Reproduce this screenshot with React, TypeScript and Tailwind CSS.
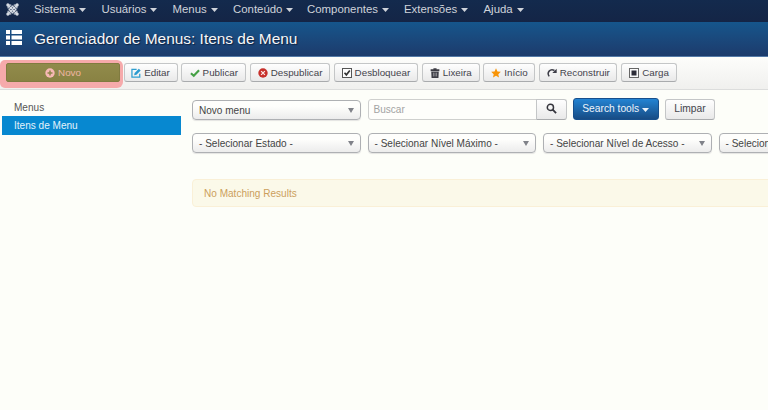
import type { ReactNode } from "react";

const menus = [
  { label: "Sistema", w: "w-[67.5px]" },
  { label: "Usuários", w: "w-[71px]" },
  { label: "Menus", w: "w-[60.5px]" },
  { label: "Conteúdo", w: "w-[74px]" },
  { label: "Componentes", w: "w-[97px]" },
  { label: "Extensões", w: "w-[79.5px]" },
  { label: "Ajuda", w: "w-[50px]" },
];

function Caret({ className = "" }: { className?: string }) {
  return (
    <svg viewBox="0 0 7 4" className={`h-[4px] w-[7px] shrink-0 ${className}`}>
      <path d="M0 0h7L3.5 4z" fill="currentColor" />
    </svg>
  );
}

function JoomlaLogo() {
  return (
    <svg viewBox="0 0 24 24" className="h-[13px] w-[13px]" fill="none" stroke="#d5dbe3" strokeLinecap="round">
      <path d="M6 12L12 6L18 12L12 18z" strokeWidth="2.600" />
      <path d="M4 4l13 13M20 4L7 17M4 20L9 15M20 20L15 15" strokeWidth="2.400" />
      <path d="M4 9V4h5M20 9V4h-5M4 15v5h5M20 15v5h-5" strokeWidth="2.400" />
      <g fill="#d5dbe3" stroke="none">
        <circle cx="3.500" cy="3.500" r="3" />
        <circle cx="20.500" cy="3.500" r="3" />
        <circle cx="3.500" cy="20.500" r="3" />
        <circle cx="20.500" cy="20.500" r="3" />
      </g>
    </svg>
  );
}

function Icon({ children }: { children: ReactNode }) {
  return (
    <svg viewBox="0 0 16 16" className="h-[10px] w-[10px] shrink-0">
      {children}
    </svg>
  );
}

const icons = {
  edit: (
    <Icon>
      <path d="M9 2H1.500v12.500H14V9" fill="none" stroke="#2f9fd0" strokeWidth="2" />
      <path d="M5 11.500l.8-3.700L12.500 1 15.500 4 8.700 10.700z" fill="#2b9bd0" />
    </Icon>
  ),
  check: (
    <Icon>
      <path d="M1.500 8.500l4.500 4L14.500 3.500" fill="none" stroke="#45a045" strokeWidth="3.400" />
    </Icon>
  ),
  cancel: (
    <Icon>
      <circle cx="8" cy="8" r="7.500" fill="#c7302b" />
      <path d="M5 5l6 6M11 5l-6 6" stroke="#fbe8e6" strokeWidth="2" />
    </Icon>
  ),
  checkbox: (
    <Icon>
      <rect x=".800" y=".800" width="14.400" height="14.400" fill="#fdfdfd" stroke="#555" strokeWidth="1.600" />
      <path d="M4 7.500l3 3.500 5.500-7" fill="none" stroke="#333" strokeWidth="2.600" />
    </Icon>
  ),
  trash: (
    <Icon>
      <path d="M5.500 2V.500h5V2H15v3H1V2zM2 6h12l-.5 10h-11z" fill="#3c3c44" />
      <path d="M5.500 7.500v6M8 7.500v6M10.500 7.500v6" stroke="#c8c8cc" strokeWidth=".9" />
    </Icon>
  ),
  star: (
    <Icon>
      <path d="M8 .500l2.300 5 5.400.600-4 3.700 1.100 5.400L8 12.500l-4.800 2.700 1.100-5.400-4-3.700 5.400-.600z" fill="#f89406" />
    </Icon>
  ),
  refresh: (
    <Icon>
      <path d="M3.500 13.500C-1 7 5 .500 12 4" fill="none" stroke="#3d3d47" strokeWidth="2.400" />
      <path d="M15.500 1v7H8.500z" fill="#3d3d47" />
    </Icon>
  ),
  batch: (
    <Icon>
      <rect x=".800" y=".800" width="14.400" height="14.400" fill="#fafafa" stroke="#666" strokeWidth="1.600" />
      <rect x="4" y="4" width="8" height="8" fill="#2c2c38" />
    </Icon>
  ),
};

const actions = [
  { label: "Editar", icon: icons.edit, w: "w-[54px]" },
  { label: "Publicar", icon: icons.check, w: "w-[65px]" },
  { label: "Despublicar", icon: icons.cancel, w: "w-[80px]" },
  { label: "Desbloquear", icon: icons.checkbox, w: "w-[84px]" },
  { label: "Lixeira", icon: icons.trash, w: "w-[58px]" },
  { label: "Início", icon: icons.star, w: "w-[52px]" },
  { label: "Reconstruir", icon: icons.refresh, w: "w-[78px]" },
  { label: "Carga", icon: icons.batch, w: "w-[56px]" },
];

const button =
  "flex shrink-0 items-center justify-center rounded-[3px] border border-[#c4c6c7] border-b-[#a9abad] bg-linear-to-b from-[#fefefe] to-[#e9e9e9] whitespace-nowrap text-[#44444c]";

function Select({ label }: { label: string }) {
  return (
    <div className="flex h-5 w-[168.500px] shrink-0 items-center justify-between rounded-[4px] border border-[#aeb0b3] bg-linear-to-b from-[#fefefc] from-30% to-[#ececec] pr-[6px] pl-[6px] whitespace-nowrap text-[#444] shadow-[0_1px_1px_#e4e4e2]">
      <span className="pt-[2px]">{label}</span>
      <svg viewBox="0 0 6 5" className="h-[5px] w-[6px] text-[#808289]">
        <path d="M0 0h6L3 5z" fill="currentColor" />
      </svg>
    </div>
  );
}

export default function App() {
  return (
    <div className="h-[410px] w-[768px] overflow-hidden bg-[#fdfef9] font-['Liberation_Sans',Arial,sans-serif] text-[10.050px] leading-none">
      <nav className="flex h-[22px] bg-linear-to-b from-[#132a4d] to-[#142546] text-[11.400px] text-[#cfd3da]">
        <div className="w-[34px] shrink-0 pt-[3px] pl-[6px]">
          <JoomlaLogo />
        </div>
        {menus.map((m) => (
          <div key={m.label} className={`flex h-[19px] shrink-0 items-center gap-1 ${m.w}`}>
            <span>{m.label}</span>
            <Caret className="mt-px" />
          </div>
        ))}
      </nav>
      <header className="flex h-[35px] items-center border-b border-[#547aa8] bg-linear-to-b from-[#15568c] to-[#1c3b6c] pl-[6px] text-[#f6f7f8]">
        <svg viewBox="0 0 16 15" className="mt-[-3px] h-[15px] w-4" fill="#fff">
          <path d="M0 0h4v4H0zM5.500 0H16v4H5.500zM0 5.500h4v4H0zM5.500 5.500H16v4H5.500zM0 11h4v4H0zM5.500 11H16v4H5.500z" />
        </svg>
        <h1 className="ml-3 text-[15.450px] whitespace-nowrap [text-shadow:1px_1px_1px_#10213f]">Gerenciador de Menus: Itens de Menu</h1>
      </header>
      <div className="flex h-[33px] items-start border-b border-[#dcdddc] bg-linear-to-b from-[#fdfdfb] to-[#f0f0ee] text-[9.800px]">
        <div className="mt-[3px] h-7 w-[123px] shrink-0 rounded-r-[6px] rounded-l-[5px] bg-[#f6aaab] pt-[3px] pl-[6px]">
          <div className="flex h-[19px] w-[114px] items-center justify-center gap-[3px] rounded-[2px] border border-[#807b40] bg-linear-to-b from-[#918b4b] to-[#898243] text-[#f0b5a4]">
            <Icon>
              <circle cx="8" cy="8" r="7.500" fill="#f8b9b5" />
              <path d="M8 4v8M4 8h8" stroke="#8d8548" strokeWidth="2.400" />
            </Icon>
            <span>Novo</span>
          </div>
        </div>
        <div className="ml-[0.500px] flex gap-[3.800px] pt-[6px]">
          {actions.map((a) => (
            <button key={a.label} className={`h-[19px] gap-[3px] ${button} ${a.w}`}>
              {a.icon}
              <span>{a.label}</span>
            </button>
          ))}
        </div>
      </div>
      <main className="flex pt-2">
        <aside className="w-[192px] shrink-0 pl-[2px]">
          <div className="flex h-[18px] items-center pl-3 pt-[3px] text-[#555]">Menus</div>
          <div className="flex h-[19px] w-[179px] items-center bg-[#0788d0] pt-[2px] pl-3 text-[#e4f3fb]">Itens de Menu</div>
        </aside>
        <section className="w-[576px] overflow-hidden">
          <div className="flex h-[22px] items-start">
            <div className="pt-[2px]">
              <Select label="Novo menu" />
            </div>
            <div className="mt-px ml-[7px] flex h-[21px] w-[169px] shrink-0 items-center rounded-l-[3px] border border-[#cfd0ce] bg-[#fefefb] pt-px pl-[5px] text-[#a3a3a3]">Buscar</div>
            <button className={`mt-px -ml-px h-[21px] w-[31px] rounded-l-none ${button}`}>
              <svg viewBox="0 0 12 12" className="mt-[-3px] h-[11px] w-[11px]" fill="none" stroke="#34343c">
                <circle cx="4.800" cy="4.800" r="3.400" strokeWidth="1.600" />
                <path d="M7.300 7.300L11 11" strokeWidth="2" />
              </svg>
            </button>
            <button className="ml-[6.500px] flex h-[22px] w-[85.500px] shrink-0 items-center justify-center gap-[3px] rounded-[3px] border border-[#174f8c] bg-linear-to-b from-[#2384d3] to-[#174c85] pt-px whitespace-nowrap text-[#edf4fb]">
              <span className="text-[10.250px]">Search tools</span>
              <Caret />
            </button>
            <button className={`mt-px ml-[6.500px] h-[21px] w-[50px] text-[10.250px] ${button}`}>Limpar</button>
          </div>
          <div className="mt-[13px] flex gap-[7px]">
            <Select label="- Selecionar Estado -" />
            <Select label="- Selecionar Nível Máximo -" />
            <Select label="- Selecionar Nível de Acesso -" />
            <Select label="- Selecionar Idioma -" />
          </div>
          <div className="mt-[26px] flex h-7 w-[590px] items-center rounded-[4px] border border-[#faf0d7] bg-[#fbf9e9] pt-[2px] pl-[11px] text-[#cc9f5c]">No Matching Results</div>
        </section>
      </main>
    </div>
  );
}
